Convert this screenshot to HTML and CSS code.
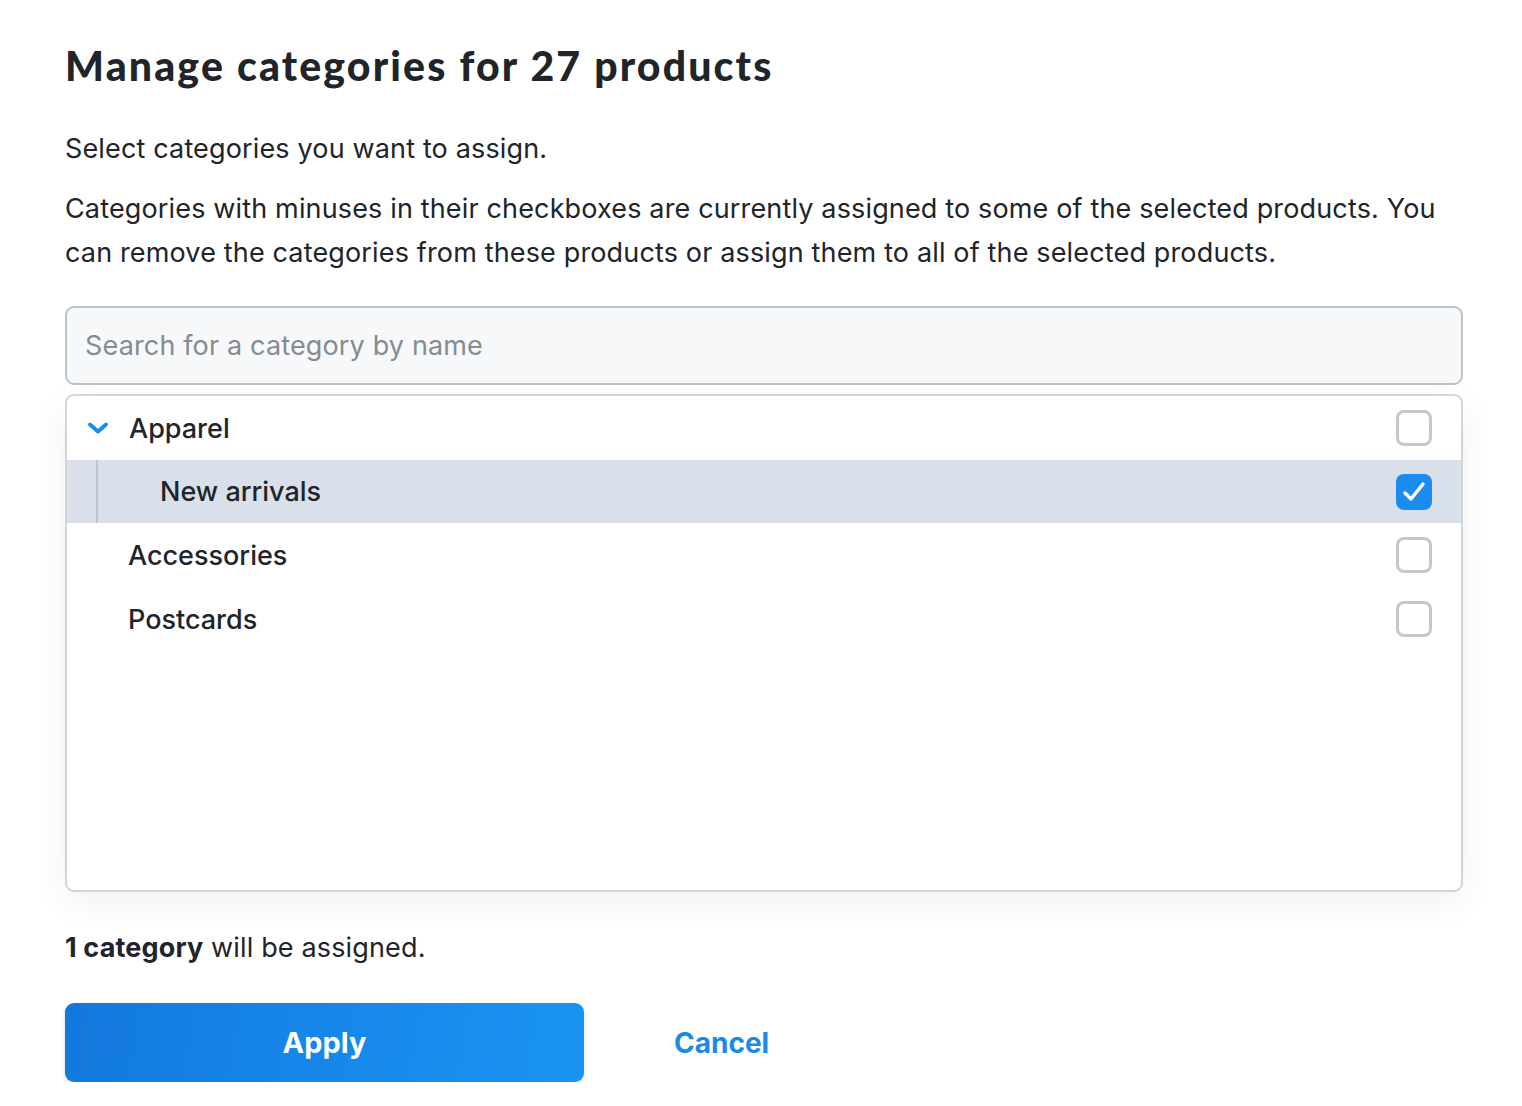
FILE: index.html
```html
<!DOCTYPE html>
<html lang="en">
<head>
<meta charset="utf-8">
<title>Manage categories</title>
<link rel="stylesheet" href="styles.css">
</head>
<body>
<main class="dialog">
  <h1 class="title">Manage categories for 27 products</h1>
  <p class="lead">Select categories you want to assign.</p>
  <p class="desc">Categories with minuses in their checkboxes are currently assigned to some of the selected products. You can remove the categories from these products or assign them to all of the selected products.</p>
  <div class="search">Search for a category by name</div>
  <div class="tree">
    <div class="row">
      <svg class="chevron" width="22" height="14" viewBox="0 0 22 14"><path d="M3 3.5 L11 10.5 L19 3.5" fill="none" stroke="#1a8cf0" stroke-width="4" stroke-linecap="round" stroke-linejoin="round"/></svg>
      <span class="label">Apparel</span>
      <span class="box"></span>
    </div>
    <div class="row selected">
      <span class="guide"></span>
      <span class="label child">New arrivals</span>
      <span class="box checked"><svg width="36" height="36" viewBox="0 0 36 36"><path d="M9 19 L15 25 L27 10" fill="none" stroke="#fff" stroke-width="3.5" stroke-linecap="round" stroke-linejoin="round"/></svg></span>
    </div>
    <div class="row">
      <span class="label indent">Accessories</span>
      <span class="box"></span>
    </div>
    <div class="row">
      <span class="label indent">Postcards</span>
      <span class="box"></span>
    </div>
  </div>
  <p class="summary"><strong>1 category</strong> will be assigned.</p>
  <div class="actions">
    <button class="apply">Apply</button>
    <button class="cancel">Cancel</button>
  </div>
</main>
</body>
</html>
```
FILE: styles.css
```css
* { box-sizing: border-box; }
html, body { margin: 0; padding: 0; background: #fff; }
body {
  font-family: Inter, "Noto Sans", sans-serif;
  color: #212429;
}
.dialog {
  width: 1398px;
  margin-left: 65px;
  padding-top: 39px;
}
.title {
  margin: 0;
  font-family: Lato, "Open Sans", sans-serif;
  font-weight: 900;
  font-size: 41px;
  line-height: 54px;
  letter-spacing: 2.15px;
  color: #212429;
}
.lead {
  margin: 34px 0 0;
  font-size: 27px;
  line-height: 44px;
  letter-spacing: 0.15px;
}
.desc {
  margin: 16px 0 0;
  font-size: 27px;
  line-height: 44px;
  letter-spacing: 0.15px;
}
.search {
  margin-top: 31px;
  height: 79px;
  border: 2px solid #bcc2c9;
  border-radius: 9px;
  background: #f7f8f9;
  padding: 0 18px;
  display: flex;
  align-items: center;
  font-size: 27px;
  letter-spacing: 0.15px;
  color: #858b93;
}
.tree {
  margin-top: 9px;
  height: 498px;
  border: 2px solid #d2d6db;
  border-radius: 9px;
  background: #fff;
  box-shadow: 0 10px 36px rgba(0, 0, 0, 0.06);
  overflow: hidden;
}
.row {
  display: flex;
  align-items: center;
  height: 64px;
  padding-right: 29px;
  font-size: 27px;
  font-weight: 500;
}
.row.selected { background: #d9e0e9; height: 63px; }
.chevron { margin-left: 20px; margin-right: 20px; flex: none; }
.label { flex: 1; }
.indent { padding-left: 61px; }
.guide {
  align-self: stretch;
  width: 2px;
  background: #bcc4cd;
  margin-left: 29px;
  margin-right: 62px;
}
.box {
  width: 36px;
  height: 36px;
  border: 3px solid #c4c8cd;
  border-radius: 8px;
  flex: none;
  background: #fff;
}
.box.checked {
  border: none;
  background: #1a8cf0;
  display: block;
}
.box.checked svg { display: block; }
.summary {
  margin: 38px 0 0;
  font-size: 27px;
  line-height: 36px;
  letter-spacing: 0.15px;
}
.summary strong { font-weight: 700; }
.actions {
  margin-top: 37px;
  display: flex;
  align-items: center;
}
.apply {
  width: 519px;
  height: 79px;
  border: none;
  border-radius: 9px;
  background: linear-gradient(100deg, #1278dc 0%, #1686e8 45%, #1a94f1 100%);
  box-shadow: 0 2px 4px rgba(0, 0, 0, 0.15);
  color: #fff;
  font-family: Inter, "Noto Sans", sans-serif;
  font-weight: 700;
  font-size: 29px;
  cursor: pointer;
}
.cancel {
  margin-left: 90px;
  border: none;
  background: none;
  padding: 0;
  color: #1a8ae8;
  font-family: Inter, "Noto Sans", sans-serif;
  font-weight: 700;
  font-size: 28px;
  cursor: pointer;
}
```
